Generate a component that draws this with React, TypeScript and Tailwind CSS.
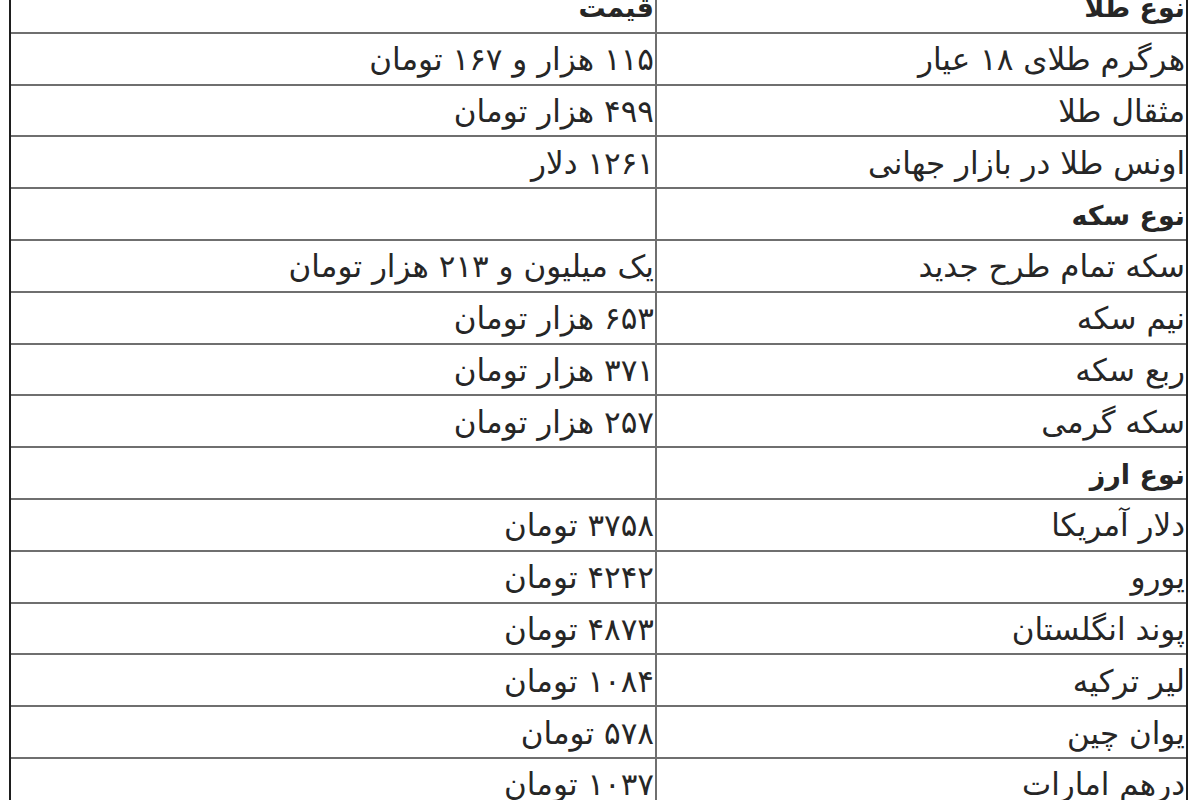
import React from "react";

type Row = { a: string; b: string; bold?: boolean };

const rows: Row[] = [
  { a: "نوع طلا", b: "قیمت", bold: true },
  { a: "هرگرم طلای ۱۸ عیار", b: "۱۱۵ هزار و ۱۶۷ تومان" },
  { a: "مثقال طلا", b: "۴۹۹ هزار تومان" },
  { a: "اونس طلا در بازار جهانی", b: "۱۲۶۱ دلار" },
  { a: "نوع سکه", b: "", bold: true },
  { a: "سکه تمام طرح جدید", b: "یک میلیون و ۲۱۳ هزار تومان" },
  { a: "نیم سکه", b: "۶۵۳ هزار تومان" },
  { a: "ربع سکه", b: "۳۷۱ هزار تومان" },
  { a: "سکه گرمی", b: "۲۵۷ هزار تومان" },
  { a: "نوع ارز", b: "", bold: true },
  { a: "دلار آمریکا", b: "۳۷۵۸ تومان" },
  { a: "یورو", b: "۴۲۴۲ تومان" },
  { a: "پوند انگلستان", b: "۴۸۷۳ تومان" },
  { a: "لیر ترکیه", b: "۱۰۸۴ تومان" },
  { a: "یوان چین", b: "۵۷۸ تومان" },
  { a: "درهم امارات", b: "۱۰۳۷ تومان" },
];

export default function App() {
  return (
    <div className="w-[1200px] h-[800px] overflow-hidden bg-white">
      <div
        dir="rtl"
        className="ml-[9px] -mt-[18px] w-[1179px] border-x-2 border-[#1e1e1e] text-[#262626] text-[31px] leading-none"
        style={{ fontFamily: '"DejaVu Sans", Tahoma, sans-serif' }}
      >
        {rows.map((r, i) => (
          <div
            key={i}
            className="grid grid-cols-[531px_1fr] h-[51.8px] border-b-2 border-[#6f6f6f]"
          >
            <div
              className={`flex items-center pr-[1px] pt-[2px] border-l-2 border-[#6f6f6f] whitespace-nowrap ${
                r.bold ? "font-bold text-[27px]" : ""
              }`}
            >
              {r.a}
            </div>
            <div
              className={`flex items-center pr-[1px] pt-[2px] whitespace-nowrap ${
                i === 0 ? "font-bold text-[27px]" : ""
              }`}
            >
              {r.b}
            </div>
          </div>
        ))}
      </div>
    </div>
  );
}
